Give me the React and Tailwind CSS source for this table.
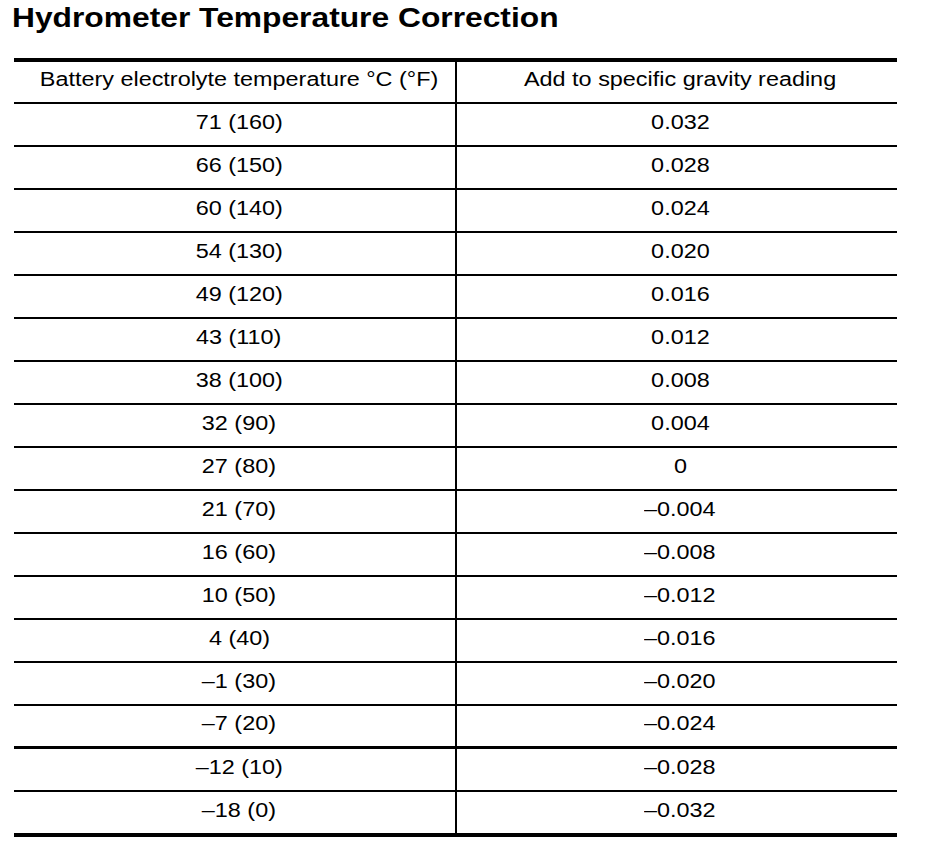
const rows = [
    ['71 (160)', '0.032'],
    ['66 (150)', '0.028'],
    ['60 (140)', '0.024'],
    ['54 (130)', '0.020'],
    ['49 (120)', '0.016'],
    ['43 (110)', '0.012'],
    ['38 (100)', '0.008'],
    ['32 (90)', '0.004'],
    ['27 (80)', '0'],
    ['21 (70)', '–0.004'],
    ['16 (60)', '–0.008'],
    ['10 (50)', '–0.012'],
    ['4 (40)', '–0.016'],
    ['–1 (30)', '–0.020'],
    ['–7 (20)', '–0.024'],
    ['–12 (10)', '–0.028'],
    ['–18 (0)', '–0.032'],
];

function Cell({ children, left }) {
    return (
        <div
            className={
                left
                    ? 'w-[443px] border-r-2 border-black flex items-center justify-center pb-[6px] pl-[9px]'
                    : 'flex-1 flex items-center justify-center pb-[6px] pl-[6px]'
            }
        >
            <span className="inline-block scale-x-[1.2] whitespace-nowrap">{children}</span>
        </div>
    );
}

export default function App() {
    return (
        <div className="min-h-[852px] bg-white text-black pl-[14px] font-['Liberation_Sans',Arial,sans-serif]">
            {/* Title */}
            <h1 className="-ml-[2px] pt-[2px] text-[27.5px] leading-[32px] font-bold">
                <span className="inline-block origin-left scale-x-[1.155] whitespace-nowrap">
                    Hydrometer Temperature Correction
                </span>
            </h1>

            {/* Table */}
            <div className="mt-[24px] w-[883px] border-t-4 border-black text-[19.5px] leading-[22px]">
                <div className="flex h-[42px] border-b-2 border-black">
                    <Cell left>Battery electrolyte temperature °C (°F)</Cell>
                    <Cell>Add to specific gravity reading</Cell>
                </div>

                {rows.map(([temp, add], i) => {
                    let line = 'h-[43px] border-b-2';
                    if (i === 14) line = 'h-[43px] border-b-[3px]';
                    if (i === rows.length - 1) line = 'h-[45px] border-b-4';
                    return (
                        <div key={temp} className={`flex border-black ${line}`}>
                            <Cell left>{temp}</Cell>
                            <Cell>{add}</Cell>
                        </div>
                    );
                })}
            </div>
        </div>
    );
}
